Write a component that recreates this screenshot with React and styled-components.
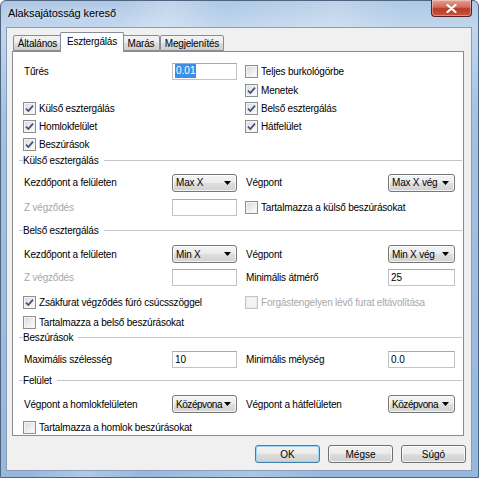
import React from "react";
import styled, { createGlobalStyle } from "styled-components";

const GlobalStyle = createGlobalStyle`
  html, body { margin: 0; padding: 0; background: #ffffff; }
  body { font-family: "Liberation Sans", Arial, sans-serif; }
  * { box-sizing: border-box; }
`;

const FONT = `"Liberation Sans", Arial, sans-serif`;

const Window = styled.div`
  width: 479px;
  height: 478px;
  display: flex;
  flex-direction: column;
  border: 1px solid #4d6580;
  border-radius: 6px 6px 0 0;
  background:
    linear-gradient(100deg, rgba(255,255,255,0) 20%, rgba(255,255,255,0.25) 30%, rgba(255,255,255,0) 40%, rgba(255,255,255,0.2) 60%, rgba(255,255,255,0) 72%),
    linear-gradient(180deg, #adc7e4 0px, #c2d7ee 26px, #a3c1e2 120px, #96b8de 100%);
  font-family: ${FONT};
`;

const TitleBar = styled.div`
  height: 26px;
  display: flex;
  justify-content: space-between;
  align-items: flex-start;
  padding-left: 7px;
`;

const Title = styled.div`
  margin-top: 6px;
  font-size: 11px;
  color: #000;
  letter-spacing: -0.1px;
  text-shadow: 0 0 6px rgba(255,255,255,0.9);
`;

const CloseButton = styled.div`
  width: 41px;
  height: 17px;
  margin-right: 6px;
  margin-top: -1px;
  border: 1px solid #5a1e1e;
  border-top: none;
  border-radius: 0 0 4px 4px;
  background: linear-gradient(180deg, #e6a093 0%, #d26a58 45%, #b93a24 55%, #c8553f 100%);
  box-shadow: inset 0 0 0 1px rgba(255,255,255,0.35);
  display: flex;
  align-items: center;
  justify-content: center;
`;

const Client = styled.div`
  flex: 1;
  margin: 0 6px 6px 5px;
  border: 1px solid #8b9db5;
  background: #f0f0f0;
  display: flex;
  flex-direction: column;
`;

const TabStrip = styled.div`
  height: 23px;
  display: flex;
  align-items: flex-end;
  padding-left: 6px;
`;

const Tab = styled.div`
  width: ${(p) => (p.$active ? p.$w + 4 : p.$w)}px;
  height: ${(p) => (p.$active ? 20 : 16)}px;
  margin: ${(p) => (p.$active ? "0 -2px -1px -2px" : "0")};
  z-index: ${(p) => (p.$active ? 2 : 1)};
  border: 1px solid #898c95;
  border-bottom: ${(p) => (p.$active ? "none" : "1px solid #898c95")};
  border-radius: 2px 2px 0 0;
  background: ${(p) =>
    p.$active
      ? "#ffffff"
      : "linear-gradient(180deg, #f3f3f3 0%, #ebebeb 50%, #dddddd 50%, #cfcfcf 100%)"};
  font-size: 10px;
  letter-spacing: -0.2px;
  color: #000;
  display: flex;
  align-items: ${(p) => (p.$active ? "flex-start" : "center")};
  padding-top: ${(p) => (p.$active ? "3px" : "0")};
  justify-content: center;
`;

const Panel = styled.div`
  width: 452px;
  height: 385px;
  margin-left: 5px;
  border: 1px solid #898c95;
  background: #ffffff;
  padding: 9px 8px 0 11px;
  display: flex;
  flex-direction: column;
  z-index: 1;
`;

const Row = styled.div`
  height: ${(p) => p.$h}px;
  display: flex;
  align-items: center;
  gap: 9px;
`;

const Half = styled.div`
  width: ${(p) => p.$w}px;
  display: flex;
  align-items: center;
`;

const Label = styled.div`
  flex: 1;
  font-size: 10px;
  letter-spacing: -0.2px;
  color: ${(p) => (p.$disabled ? "#a8a8a8" : "#000")};
  white-space: nowrap;
`;

const TextBox = styled.div`
  width: ${(p) => p.$w}px;
  height: 17px;
  border: 1px solid #bfc3ca;
  border-top-color: #a5a9b1;
  background: #fff;
  font-size: 10px;
  display: flex;
  align-items: center;
  padding-left: 2px;
`;

const Selected = styled.span`
  background: #3d8ee6;
  color: #fff;
  padding: 1px 1px;
  line-height: 12px;
`;

const Combo = styled.div`
  width: ${(p) => p.$w}px;
  height: 18px;
  border: 1px solid #777;
  border-radius: 3px;
  background: linear-gradient(180deg, #f4f4f4 0%, #ececec 50%, #dedede 50%, #d2d2d2 100%);
  box-shadow: inset 0 0 0 1px rgba(255,255,255,0.7);
  display: flex;
  align-items: center;
  justify-content: space-between;
  gap: 2px;
  padding: 0 5px 0 3px;
  font-size: 10px;
  letter-spacing: ${(p) => (p.$tight ? "-0.45px" : "-0.2px")};
  color: #000;
  white-space: nowrap;
`;

const CheckRow = styled.div`
  display: flex;
  align-items: center;
  gap: 3px;
  margin-left: -1px;
  font-size: 10px;
  letter-spacing: -0.2px;
  color: ${(p) => (p.$disabled ? "#a8a8a8" : "#000")};
  white-space: nowrap;
`;

const Box = styled.div`
  width: 13px;
  height: 13px;
  border: 1px solid ${(p) => (p.$disabled ? "#c4c4c4" : "#8e8f8f")};
  background: ${(p) =>
    p.$disabled
      ? "#f4f4f4"
      : "linear-gradient(135deg, #d8d8d8 0%, #f0f0f0 60%, #ffffff 100%)"};
  box-shadow: inset 0 0 0 1px ${(p) => (p.$disabled ? "#ececec" : "#f4f4f4")};
  display: flex;
  align-items: center;
  justify-content: center;
  flex: none;
`;

const GroupHeader = styled.div`
  height: ${(p) => p.$h}px;
  display: flex;
  align-items: center;
  margin: 0 -7px 0 -5px;
  font-size: 10px;
  letter-spacing: -0.2px;
  color: #000;
  &::before {
    content: "";
    width: 4px;
    height: 1px;
    background: #c3c7cc;
  }
  &::after {
    content: "";
    flex: 1;
    height: 1px;
    background: #c3c7cc;
    margin-left: 5px;
  }
`;

const ButtonRow = styled.div`
  display: flex;
  justify-content: flex-end;
  gap: 8px;
  margin-top: 9px;
  padding-right: 5px;
`;

const Button = styled.div`
  width: 65px;
  height: 18px;
  border: 1px solid ${(p) => (p.$default ? "#3c7fb1" : "#707070")};
  border-radius: 3px;
  background: linear-gradient(180deg, #f2f2f2 0%, #ebebeb 50%, #dddddd 50%, #cfcfcf 100%);
  box-shadow: inset 0 0 0 1px ${(p) => (p.$default ? "#9fd4f5" : "rgba(255,255,255,0.7)")};
  display: flex;
  align-items: center;
  justify-content: center;
  font-size: 10px;
  color: #000;
`;

const Check = () => (
  <svg width="9" height="9" viewBox="0 0 9 9">
    <path d="M1 4.6 L3.4 7 L8 1.6" fill="none" stroke="#3d4f7c" strokeWidth="1.7" />
  </svg>
);

const Checkbox = ({ checked, disabled, children }) => (
  <CheckRow $disabled={disabled}>
    <Box $disabled={disabled}>{checked && <Check />}</Box>
    {children}
  </CheckRow>
);

const Arrow = () => (
  <svg width="7" height="4" viewBox="0 0 7 4" style={{ flex: "none" }}>
    <path d="M0 0 L7 0 L3.5 4 Z" fill="#000" />
  </svg>
);

const Drop = ({ w, tight, children }) => (
  <Combo $w={w} $tight={tight}>
    <span>{children}</span>
    <Arrow />
  </Combo>
);

const L = 213;
const R = 209;

export default function App() {
  return (
    <>
      <GlobalStyle />
      <Window>
        <TitleBar>
          <Title>Alaksajátosság kereső</Title>
          <CloseButton>
            <svg width="11" height="9" viewBox="0 0 11 9">
              <path d="M1.5 1 L9.5 8 M9.5 1 L1.5 8" stroke="#fff" strokeWidth="2.2" strokeLinecap="round" />
            </svg>
          </CloseButton>
        </TitleBar>
        <Client>
          <TabStrip>
            <Tab $w={49}>Általános</Tab>
            <Tab $w={60} $active>Esztergálás</Tab>
            <Tab $w={38}>Marás</Tab>
            <Tab $w={64}>Megjelenítés</Tab>
          </TabStrip>
          <Panel>
            <Row $h={20}>
              <Half $w={L}>
                <Label>Tűrés</Label>
                <TextBox $w={65}><Selected>0.01</Selected></TextBox>
              </Half>
              <Half $w={R}>
                <Checkbox>Teljes burkológörbe</Checkbox>
              </Half>
            </Row>
            <Row $h={18}>
              <Half $w={L} />
              <Half $w={R}>
                <Checkbox checked>Menetek</Checkbox>
              </Half>
            </Row>
            <Row $h={18}>
              <Half $w={L}>
                <Checkbox checked>Külső esztergálás</Checkbox>
              </Half>
              <Half $w={R}>
                <Checkbox checked>Belső esztergálás</Checkbox>
              </Half>
            </Row>
            <Row $h={19}>
              <Half $w={L}>
                <Checkbox checked>Homlokfelület</Checkbox>
              </Half>
              <Half $w={R}>
                <Checkbox checked>Hátfelület</Checkbox>
              </Half>
            </Row>
            <Row $h={17}>
              <Half $w={L}>
                <Checkbox checked>Beszúrások</Checkbox>
              </Half>
            </Row>
            <GroupHeader $h={15}>Külső esztergálás</GroupHeader>
            <Row $h={29}>
              <Half $w={L}>
                <Label>Kezdőpont a felületen</Label>
                <Drop w={65}>Max X</Drop>
              </Half>
              <Half $w={R}>
                <Label>Végpont</Label>
                <Drop w={67}>Max X vég</Drop>
              </Half>
            </Row>
            <Row $h={20}>
              <Half $w={L}>
                <Label $disabled>Z végződés</Label>
                <TextBox $w={65} />
              </Half>
              <Half $w={R}>
                <Checkbox>Tartalmazza a külső beszúrásokat</Checkbox>
              </Half>
            </Row>
            <GroupHeader $h={26}>Belső esztergálás</GroupHeader>
            <Row $h={22}>
              <Half $w={L}>
                <Label>Kezdőpont a felületen</Label>
                <Drop w={65}>Min X</Drop>
              </Half>
              <Half $w={R}>
                <Label>Végpont</Label>
                <Drop w={67}>Min X vég</Drop>
              </Half>
            </Row>
            <Row $h={24}>
              <Half $w={L}>
                <Label $disabled>Z végződés</Label>
                <TextBox $w={65} />
              </Half>
              <Half $w={R}>
                <Label>Minimális átmérő</Label>
                <TextBox $w={67}>25</TextBox>
              </Half>
            </Row>
            <Row $h={26}>
              <Half $w={L}>
                <Checkbox checked>Zsákfurat végződés fúró csúcsszöggel</Checkbox>
              </Half>
              <Half $w={R}>
                <Checkbox disabled>Forgástengelyen lévő furat eltávolítása</Checkbox>
              </Half>
            </Row>
            <Row $h={14}>
              <Half $w={L}>
                <Checkbox>Tartalmazza a belső beszúrásokat</Checkbox>
              </Half>
            </Row>
            <GroupHeader $h={16}>Beszúrások</GroupHeader>
            <Row $h={28}>
              <Half $w={L}>
                <Label>Maximális szélesség</Label>
                <TextBox $w={65}>10</TextBox>
              </Half>
              <Half $w={R}>
                <Label>Minimális mélység</Label>
                <TextBox $w={67}>0.0</TextBox>
              </Half>
            </Row>
            <GroupHeader $h={14}>Felület</GroupHeader>
            <Row $h={34}>
              <Half $w={L}>
                <Label>Végpont a homlokfelületen</Label>
                <Drop w={65} tight>Középvona</Drop>
              </Half>
              <Half $w={R}>
                <Label>Végpont a hátfelületen</Label>
                <Drop w={67} tight>Középvona</Drop>
              </Half>
            </Row>
            <Row $h={12}>
              <Half $w={L}>
                <Checkbox>Tartalmazza a homlok beszúrásokat</Checkbox>
              </Half>
            </Row>
          </Panel>
          <ButtonRow>
            <Button $default>OK</Button>
            <Button>Mégse</Button>
            <Button>Súgó</Button>
          </ButtonRow>
        </Client>
      </Window>
    </>
  );
}
